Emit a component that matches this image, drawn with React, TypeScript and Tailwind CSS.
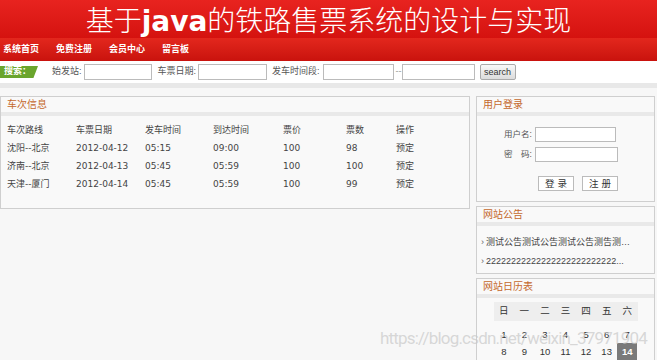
const trains = [
  { route: "沈阳--北京", date: "2012-04-12", start: "05:15", end: "09:00", price: "100", count: "98" },
  { route: "济南--北京", date: "2012-04-13", start: "05:45", end: "05:59", price: "100", count: "100" },
  { route: "天津--厦门", date: "2012-04-14", start: "05:45", end: "05:59", price: "100", count: "99" },
]

const navItems = ["系统首页", "免费注册", "会员中心", "留言板"]
const weekDays = ["日", "一", "二", "三", "四", "五", "六"]

function PanelTitle({ children }: { children: string }) {
  return (
    <div className="h-[19px] border-b-[4px] border-[#e9e9e9] pl-[6px] pt-[1px] text-[10px] leading-[14px] text-[#c4682c]">
      {children}
    </div>
  )
}

export default function App() {
  return (
    <div className="relative h-[360px] w-[657px] overflow-hidden bg-[#f7f7f7] font-['Liberation_Sans','Noto_Sans_CJK_SC',sans-serif] text-[#333]">
      {/* banner */}
      <div className="flex h-[38px] items-center justify-center bg-gradient-to-b from-[#e8231f] to-[#d5120f] text-white">
        <span className="pt-[2px] font-['Noto_Sans_CJK_SC',sans-serif] text-[28px] font-light leading-none">
          基于<b className="font-['DejaVu_Sans',sans-serif] font-bold">java</b>的铁路售票系统的设计与实现
        </span>
      </div>

      {/* nav */}
      <div className="flex h-[23px] items-center bg-gradient-to-b from-[#e3271d] to-[#c9120d] pl-[3px] pt-[1px]">
        {navItems.map((item) => (
          <span key={item} className="mr-[17px] text-[9px] font-bold text-white">
            {item}
          </span>
        ))}
      </div>

      {/* search */}
      <div className="flex h-[27px] items-center border-b-[5px] border-[#e8e8e8] bg-white text-[9px] text-[#555]">
        <span className="flex h-[12px] w-[38px] items-center bg-[#6aa52d] pl-[4px] text-[9px] font-bold text-white [clip-path:polygon(0_0,100%_0,88%_100%,0_100%)]">
          搜索：
        </span>
        <span className="ml-[14px]">始发站:</span>
        <input className="ml-[2px] h-[16px] w-[68px] border border-[#bbb] bg-white" />
        <span className="ml-[6px]">车票日期:</span>
        <input className="ml-[2px] h-[16px] w-[69px] border border-[#bbb] bg-white" />
        <span className="ml-[5px]">发车时间段:</span>
        <input className="ml-[3px] h-[16px] w-[71px] border border-[#bbb] bg-white" />
        <span className="ml-[2px] text-[#999]">--</span>
        <input className="h-[16px] w-[73px] border border-[#bbb] bg-white" />
        <button className="ml-[5px] h-[16px] w-[36px] rounded-[2px] border border-[#aaa] bg-gradient-to-b from-[#f8f8f8] to-[#dcdcdc] text-[9px] leading-none text-[#333]">
          search
        </button>
      </div>

      {/* main */}
      <div className="mt-[8px] flex gap-[6px]">
        <div className="h-[113px] w-[470px] border border-[#cfcfcf] bg-[#f9f9f9]">
          <PanelTitle>车次信息</PanelTitle>
          <table className="mt-[5px] w-full font-['DejaVu_Sans','Noto_Sans_CJK_SC',sans-serif] text-[9px] text-[#444]">
            <thead>
              <tr className="h-[19px] text-left">
                <th className="w-[75px] pl-[6px] font-normal">车次路线</th>
                <th className="w-[69px] font-normal">车票日期</th>
                <th className="w-[68px] font-normal">发车时间</th>
                <th className="w-[70px] font-normal">到达时间</th>
                <th className="w-[63px] font-normal">票价</th>
                <th className="w-[50px] font-normal">票数</th>
                <th className="font-normal">操作</th>
              </tr>
            </thead>
            <tbody>
              {trains.map((t) => (
                <tr key={t.route} className="h-[18px]">
                  <td className="pl-[6px]">{t.route}</td>
                  <td>{t.date}</td>
                  <td>{t.start}</td>
                  <td>{t.end}</td>
                  <td>{t.price}</td>
                  <td>{t.count}</td>
                  <td>预定</td>
                </tr>
              ))}
            </tbody>
          </table>
        </div>

        <div className="flex w-[179px] flex-col gap-[4px]">
          <div className="h-[106px] border border-[#cfcfcf] bg-[#f9f9f9]">
            <PanelTitle>用户登录</PanelTitle>
            <div className="mt-[11px] flex flex-col gap-[5px] text-[8.5px] text-[#555]">
              <div className="flex items-center">
                <span className="ml-[27px] w-[31px]">用户名:</span>
                <input className="h-[15px] w-[81px] border border-[#bbb] bg-white" />
              </div>
              <div className="flex items-center">
                <span className="ml-[27px] w-[31px]">密　码:</span>
                <input className="h-[15px] w-[83px] border border-[#bbb] bg-white" />
              </div>
              <div className="mt-[9px] flex gap-[8px] pl-[61px]">
                <button className="h-[15px] w-[36px] border border-[#bbb] bg-white pl-[3px] text-[9.5px] leading-none tracking-[3px] text-[#333]">
                  登录
                </button>
                <button className="h-[15px] w-[36px] border border-[#bbb] bg-white pl-[3px] text-[9.5px] leading-none tracking-[3px] text-[#333]">
                  注册
                </button>
              </div>
            </div>
          </div>

          <div className="h-[68px] border border-[#cfcfcf] bg-[#f9f9f9]">
            <PanelTitle>网站公告</PanelTitle>
            <div className="mt-[10px] flex flex-col gap-[5px] pl-[4px] pr-[6px] text-[9px] text-[#444]">
              <div className="truncate">
                <span className="mr-[2px] text-[#666]">›</span>测试公告测试公告测试公告测告测…
              </div>
              <div className="truncate">
                <span className="mr-[2px] text-[#666]">›</span>22222222222222222222222222...
              </div>
            </div>
          </div>

          <div className="h-[90px] border border-[#cfcfcf] bg-[#f9f9f9]">
            <PanelTitle>网站日历表</PanelTitle>
            <div className="mx-auto mt-[4px] w-[144px] text-[9.5px] text-[#333]">
              <div className="grid h-[19px] grid-cols-7 items-center bg-[#eeeeee] text-center">
                {weekDays.map((d) => (
                  <span key={d}>{d}</span>
                ))}
              </div>
              <div className="mt-[5px] grid grid-cols-7 text-center leading-[17px]">
                {[1, 2, 3, 4, 5, 6, 7, 8, 9, 10, 11, 12, 13, 14].map((n) => (
                  <span key={n} className={n === 14 ? "bg-[#7a7a7a] font-bold text-white" : ""}>
                    {n}
                  </span>
                ))}
              </div>
            </div>
          </div>
        </div>
      </div>

      {/* watermark */}
      <div className="absolute bottom-[13px] right-[10px] font-['Roboto',sans-serif] text-[17px] leading-none tracking-[-0.8px] text-[#c8c8c8]/70">
        https://blog.csdn.net/weixin_37971904
      </div>
    </div>
  )
}
